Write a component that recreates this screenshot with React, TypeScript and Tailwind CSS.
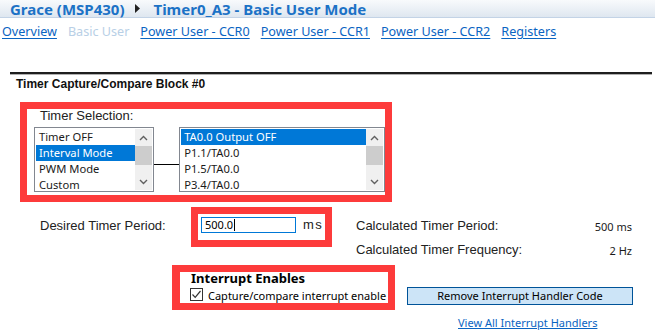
import React from 'react';

const SEGOE = { fontFamily: '"Noto Sans", "Open Sans", sans-serif' };
const ARIAL = { fontFamily: '"Liberation Sans", Arial, sans-serif' };

const LINKS = [
  { label: 'Overview', muted: false },
  { label: 'Basic User', muted: true },
  { label: 'Power User - CCR0', muted: false },
  { label: 'Power User - CCR1', muted: false },
  { label: 'Power User - CCR2', muted: false },
  { label: 'Registers', muted: false },
];

function Chevron({ up }: { up?: boolean }) {
  return (
    <svg width="9" height="6" viewBox="0 0 9 6" className="block">
      <path
        d={up ? 'M1 5 L4.5 1.5 L8 5' : 'M1 1 L4.5 4.5 L8 1'}
        fill="none"
        stroke="#606060"
        strokeWidth="1.4"
      />
    </svg>
  );
}

function ListBox({ items, selected, width }: { items: string[]; selected: number; width: number }) {
  return (
    <div
      className="h-[65px] border border-[#828790] bg-white flex p-px overflow-hidden"
      style={{ width }}
    >
      <div className="flex-1 overflow-hidden">
        {items.map((it, i) => (
          <div
            key={it}
            className={
              'h-4 leading-4 pl-[3px] text-[11.2px] whitespace-nowrap ' +
              (i === selected ? 'bg-[#0078d7] text-white' : 'text-[#1a1a1a]')
            }
            style={SEGOE}
          >
            {it}
          </div>
        ))}
      </div>
      <div className="w-[17px] bg-[#f0f0f0] flex flex-col items-center">
        <div className="h-[17px] flex items-center justify-center">
          <Chevron up />
        </div>
        <div className="w-full h-[19px] bg-[#cdcdcd]" />
        <div className="flex-1" />
        <div className="h-[17px] flex items-center justify-center">
          <Chevron />
        </div>
      </div>
    </div>
  );
}

export default function App() {
  return (
    <div className="w-[655px] h-[332px] overflow-hidden bg-white text-[#1a1a1a]">
      {/* header */}
      <div className="h-[18px] bg-gradient-to-b from-[#f8fafc] to-[#dfe7f0] border-b border-[#c3d3e6] flex items-center pl-[10px]">
        <span className="text-[15px] font-bold text-[#1c72c6] leading-[18px]" style={SEGOE}>
          Grace (MSP430)
        </span>
        <svg width="5" height="9" viewBox="0 0 5 9" className="ml-[11px] mr-[13px]">
          <path d="M0 0 L5 4.5 L0 9 Z" fill="#222" />
        </svg>
        <span className="text-[15px] font-bold text-[#1c72c6] leading-[18px]" style={SEGOE}>
          Timer0_A3 - Basic User Mode
        </span>
      </div>

      {/* tabs */}
      <div className="mt-[6px] pl-[2px] flex gap-[11px] text-[12.6px] leading-4" style={SEGOE}>
        {LINKS.map((l) => (
          <span
            key={l.label}
            className={l.muted ? 'text-[#b8cfe6]' : 'text-[#0a64c2] underline underline-offset-2'}
          >
            {l.label}
          </span>
        ))}
      </div>

      {/* separator */}
      <div className="mt-[32px] ml-[10px] mr-[3px] border-t-2 border-[#1e1e1e] border-b border-b-[#b0b0b0] h-[3px]" />

      <div className="mt-[2px] pl-4 text-[12px] font-bold leading-[14px] text-[#111]" style={ARIAL}>
        Timer Capture/Compare Block #0
      </div>

      {/* timer selection */}
      <div className="mt-[11px] ml-5 w-[372px] h-[100px] border-[7px] border-[#fd3b3b] bg-white">
        <div className="pl-[13px] text-[13px] leading-[13px] text-[#222]" style={ARIAL}>
          Timer Selection:
        </div>
        <div className="mt-[5px] ml-[7px] flex items-start">
          <ListBox
            items={['Timer OFF', 'Interval Mode', 'PWM Mode', 'Custom']}
            selected={1}
            width={121}
          />
          <div className="w-[25px] h-px bg-black mt-[37px]" />
          <ListBox
            items={['TA0.0 Output OFF', 'P1.1/TA0.0', 'P1.5/TA0.0', 'P3.4/TA0.0']}
            selected={0}
            width={207}
          />
        </div>
      </div>

      {/* period row */}
      <div className="mt-[5px] flex items-start">
        <div className="ml-10 w-[151px] mt-[12px] text-[13px] leading-[14px] text-[#222]" style={ARIAL}>
          Desired Timer Period:
        </div>
        <div className="w-[141px] h-[40px] border-[7px] border-[#fd3b3b] bg-white flex items-start pl-[3px] pt-[3px]">
          <div
            className="w-[95px] h-4 border border-[#0078d7] flex items-center pl-[3px] text-[11px] text-black"
            style={SEGOE}
          >
            500.0<span className="ml-px w-px h-[12px] bg-black" />
          </div>
          <span className="ml-[7px] text-[13px] leading-4 tracking-[1.5px] text-[#222]" style={ARIAL}>
            ms
          </span>
        </div>
        <div className="ml-6 w-[276px] mt-[12px] flex flex-col gap-[10px]">
          <div className="flex justify-between items-end h-[14px]">
            <span className="text-[13px] leading-[14px] text-[#222]" style={ARIAL}>
              Calculated Timer Period:
            </span>
            <span className="text-[11px] leading-[12px]" style={SEGOE}>
              500 ms
            </span>
          </div>
          <div className="flex justify-between items-end h-[14px]">
            <span className="text-[13px] leading-[14px] text-[#222]" style={ARIAL}>
              Calculated Timer Frequency:
            </span>
            <span className="text-[11px] leading-[12px]" style={SEGOE}>
              2 Hz
            </span>
          </div>
        </div>
      </div>

      {/* interrupt row */}
      <div className="mt-[8px] flex items-start">
        <div className="ml-[172px] w-[223px] h-[45px] border-[7px] border-l-8 border-[#fd3b3b] bg-white">
          <div className="-mt-px ml-[11px] text-[13px] font-bold leading-[14px] text-black" style={SEGOE}>
            Interrupt Enables
          </div>
          <div className="mt-[2px] ml-[10px] flex items-center">
            <svg width="13" height="13" viewBox="0 0 13 13">
              <rect x="0.5" y="0.5" width="12" height="12" fill="#fff" stroke="#333" />
              <path d="M2.5 6.5 L5.2 9.3 L10.5 3" fill="none" stroke="#333" strokeWidth="1.2" />
            </svg>
            <span className="ml-[5px] text-[11px] leading-[13px] mt-[2px] text-black" style={SEGOE}>
              Capture/compare interrupt enable
            </span>
          </div>
        </div>
        <div
          className="ml-3 mt-[22px] w-[226px] h-[18px] bg-[#cce4f7] border border-[#005499] flex items-center justify-center text-[11px] text-black"
          style={SEGOE}
        >
          Remove Interrupt Handler Code
        </div>
      </div>

      <div className="mt-[6px] ml-[458px] text-[11px] leading-[14px] text-[#0a64c2] underline" style={SEGOE}>
        View All Interrupt Handlers
      </div>
    </div>
  );
}
